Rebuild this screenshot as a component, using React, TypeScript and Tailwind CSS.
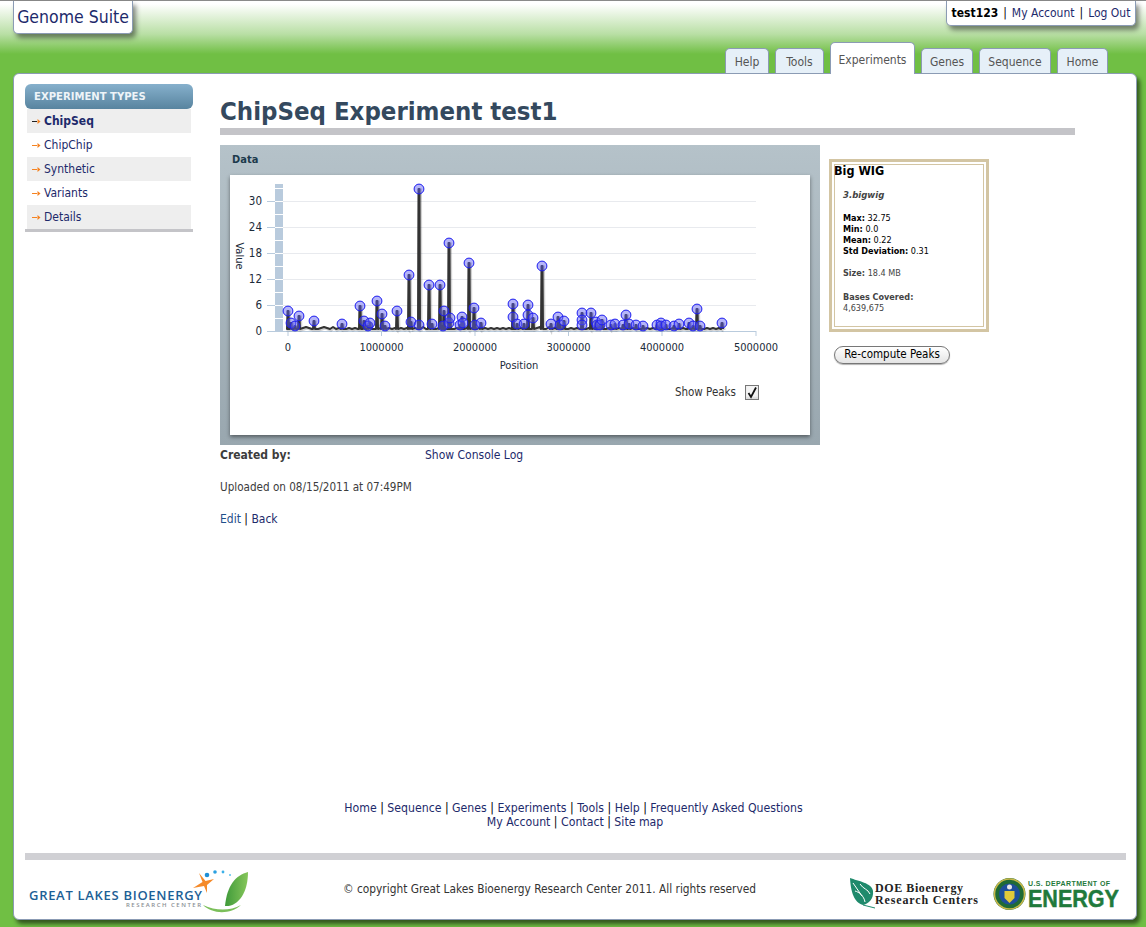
const navItems = ['ChipSeq', 'ChipChip', 'Synthetic', 'Variants', 'Details'];

const tabs = [
  { label: 'Help', width: 'w-[44px]' },
  { label: 'Tools', width: 'w-[49px]' },
  { label: 'Experiments', width: 'w-[85px]', active: true },
  { label: 'Genes', width: 'w-[52px]' },
  { label: 'Sequence', width: 'w-[72px]' },
  { label: 'Home', width: 'w-[51px]' },
];

// peak tops, in page pixels, read off the plot
const peaks: [number, number][] = [
  [288, 311], [291, 323], [295, 326], [299, 316], [314, 321], [342, 324], [360, 306], [364, 321],
  [368, 326], [370, 323], [377, 301], [382, 314], [385, 326], [397, 311], [409, 275], [411, 322],
  [419, 189], [419, 325], [429, 285], [432, 324], [440, 285], [443, 326], [444, 311], [449, 243],
  [449, 323], [450, 318], [460, 325], [462, 317], [463, 323], [469, 263], [474, 308], [475, 325],
  [481, 323], [513, 304], [513, 317], [517, 324], [524, 324], [528, 305], [528, 315], [533, 318],
  [542, 266], [551, 324], [558, 317], [560, 325], [564, 321], [582, 313], [582, 320], [582, 325],
  [591, 313], [596, 322], [597, 325], [600, 325], [602, 320], [611, 325], [615, 324], [623, 325],
  [626, 315], [629, 324], [636, 325], [643, 326], [657, 325], [661, 323], [661, 326], [666, 325],
  [674, 326], [679, 324], [689, 323], [693, 326], [697, 309], [700, 326], [722, 323],
];

function tracePath() {
  let d = 'M290 329';
  let x = 290;
  peaks.forEach(([px, py]) => {
    while (x + 3 < px) {
      x += 3;
      d += ` L${x} ${x % 9 === 0 ? 327 : x % 2 === 0 ? 329 : 328}`;
    }
    d += ` L${px - 1} 329 L${px - 0.5} ${py} L${px + 0.5} ${py} L${px + 1} 329`;
    x = Math.max(x, px + 1);
  });
  return d;
}

function NavArrow({ dark }: { dark?: boolean }) {
  return (
    <svg width="9" height="7" viewBox="0 0 9 7" className="shrink-0">
      <path d="M0 3.5H5" stroke={dark ? '#222' : '#f58220'} strokeWidth="1" />
      <path d="M5.5 1L8.5 3.5L5.5 6Z" fill="#f58220" />
    </svg>
  );
}

function Chart() {
  const yTicks = [
    { y: 201, label: '30' },
    { y: 227, label: '24' },
    { y: 253, label: '18' },
    { y: 279, label: '12' },
    { y: 305, label: '6' },
    { y: 331, label: '0' },
  ];
  const xTicks = [
    { x: 288, label: '0' },
    { x: 381.5, label: '1000000' },
    { x: 475, label: '2000000' },
    { x: 568.5, label: '3000000' },
    { x: 662, label: '4000000' },
    { x: 756, label: '5000000' },
  ];
  const bandBreaks = [188, 201, 214, 227, 240, 253, 266, 279, 292, 305, 318];

  return (
    <svg width="580" height="205" viewBox="230 175 580 205" className="block">
      {yTicks.slice(0, 5).map((t) => (
        <line key={t.y} x1="283" x2="756" y1={t.y + 0.5} y2={t.y + 0.5} stroke="#e8eaee" />
      ))}
      <rect x="275" y="184" width="8" height="147" fill="#b9cbdd" />
      {bandBreaks.map((y) => (
        <rect key={y} x="275" y={y} width="8" height="1" fill="#fff" />
      ))}
      <rect x="275" y="331" width="481" height="1" fill="#b9cbdd" />
      {yTicks.map((t) => (
        <g key={t.label}>
          <line x1="267" x2="275" y1={t.y + 0.5} y2={t.y + 0.5} stroke="#b9cbdd" />
          <text x="262" y={t.y + 3.5} textAnchor="end" fontSize="11.5" fill="#1c2b3a">
            {t.label}
          </text>
        </g>
      ))}
      {xTicks.map((t) => (
        <g key={t.label}>
          <line x1={t.x} x2={t.x} y1="331" y2="336" stroke="#b9cbdd" />
          <text x={t.x} y="351" textAnchor="middle" fontSize="11" fill="#1c2b3a">
            {t.label}
          </text>
        </g>
      ))}
      <text x="519" y="369" textAnchor="middle" fontSize="11" fill="#1c2b3a">
        Position
      </text>
      <text
        x="0"
        y="0"
        transform="translate(236 256) rotate(90)"
        textAnchor="middle"
        fontSize="11"
        fill="#1c2b3a"
      >
        Value
      </text>
      <path d={tracePath()} transform="translate(1 1)" fill="none" stroke="#000" strokeOpacity="0.18" strokeWidth="3" />
      <path d={tracePath()} fill="none" stroke="#333" strokeWidth="2" strokeLinejoin="round" />
      {peaks.map(([x, y], i) => (
        <circle key={i} cx={x} cy={y} r="4.9" fill="#5a5af0" fillOpacity="0.45" stroke="#1c1cf0" strokeWidth="1" />
      ))}
    </svg>
  );
}

function GlbrcLogo() {
  return (
    <svg width="222" height="44" viewBox="28 870 222 44" className="mt-[10px] block">
      <defs>
        <linearGradient id="glbrcLeaf" x1="0" x2="1" y1="0" y2="0">
          <stop offset="0" stopColor="#3f9a3a" />
          <stop offset="1" stopColor="#86c65a" />
        </linearGradient>
      </defs>
      <text x="29" y="900" fontSize="13" fontWeight="600" fill="#1d5f96" textLength="173" fontFamily="'Open Sans', sans-serif">
        GREAT LAKES BIOENERGY
      </text>
      <text x="126" y="907" fontSize="6" fontWeight="600" fill="#8b8f94" textLength="75" fontFamily="'Open Sans', sans-serif">
        RESEARCH CENTER
      </text>
      <path d="M199 873L205.500 881L214 879L207 885L207 893L204 886L193 888L202.500 882Z" fill="#f58a2a" />
      <circle cx="207" cy="875" r="2.300" fill="#1f8fd6" />
      <circle cx="215" cy="872" r="1.800" fill="#2ba0e0" />
      <circle cx="223" cy="872" r="1.400" fill="#3cb0e8" />
      <circle cx="230" cy="875" r="1" fill="#5cc0ee" />
      <path d="M248 872C236 875 227 885 225 906C238 907 248 893 248 872Z" fill="url(#glbrcLeaf)" />
      <path d="M203 905C212 914 230 915 241 905C230 911 216 911 203 905Z" fill="#7bbf5a" />
    </svg>
  );
}

function DoeLogos() {
  return (
    <div className="mt-[16px] flex items-start gap-[14px]">
      <svg width="130" height="38" viewBox="849 876 130 38" className="block">
        <path d="M850 878C858 881 872 883 873 891C874 899 868 904 863 905C856 903 851 896 850 878Z" fill="#1f8a6c" />
        <path d="M863 905L875 908" stroke="#1f8a6c" strokeWidth="1" />
        <path d="M853 883L862 896M860 884C863 889 868 889 870 894M855 891C859 892 864 896 865 902" stroke="#fff" strokeWidth="1" fill="none" />
        <text x="875" y="892" fontSize="12" fontWeight="700" fill="#222" textLength="88" fontFamily="'Liberation Serif', serif">
          DOE Bioenergy
        </text>
        <text x="875" y="904" fontSize="12" fontWeight="700" fill="#222" textLength="103" fontFamily="'Liberation Serif', serif">
          Research Centers
        </text>
      </svg>
      <svg width="128" height="38" viewBox="993 876 128 38" className="block">
        <circle cx="1009.500" cy="894" r="16" fill="#1f6b35" />
        <circle cx="1009.500" cy="894" r="15" fill="none" stroke="#c9b84a" strokeWidth="1.500" />
        <circle cx="1009.500" cy="894" r="10.500" fill="#1e4f9a" />
        <path d="M1004.500 891H1014.500V898L1009.500 903L1004.500 898Z" fill="#e2c93a" />
        <circle cx="1009.500" cy="887" r="2.500" fill="#e8e8e8" />
        <text x="1028" y="886" fontSize="7" fontWeight="700" fill="#1f7a3c" textLength="82" fontFamily="'Liberation Sans', sans-serif">
          U.S. DEPARTMENT OF
        </text>
        <text x="1028" y="907" fontSize="24" fontWeight="700" fill="#1f7a3c" textLength="91" lengthAdjust="spacingAndGlyphs" stroke="#1f7a3c" strokeWidth="0.5" fontFamily="'Liberation Sans', sans-serif">
          ENERGY
        </text>
      </svg>
    </div>
  );
}

export default function App() {
  return (
    <div className="min-h-[927px] bg-[#70bf44] font-['DejaVu_Sans_Condensed','DejaVu_Sans',sans-serif] text-[12px] text-[#3c3c3c]">
      <header className="flex h-[73px] justify-between border-t border-[#8a8a8a] bg-[linear-gradient(to_bottom,#fff_3px,#b9dfa5_33px,#70bf44_53px)] pl-[13px] pr-[10px]">
        <div className="flex h-[33px] w-[120px] items-center justify-center rounded-b-[5px] border border-t-0 border-[#8b9bb4] bg-white text-[17.5px] text-[#1d2a6b] shadow-[3px_4px_5px_rgba(0,0,0,0.45)]">
          Genome Suite
        </div>
        <div className="flex flex-col items-end">
          <div className="flex h-[25px] w-[190px] items-center justify-center gap-[5px] rounded-b-[5px] border border-t-0 border-[#8b9bb4] bg-white whitespace-nowrap text-[#1d2a6b] shadow-[3px_4px_5px_rgba(0,0,0,0.45)]">
            <b className="text-black">test123</b>
            <span className="text-black">|</span>
            <a>My Account</a>
            <span className="text-black">|</span>
            <a>Log Out</a>
          </div>
          <nav className="mt-auto mr-[28px] flex items-end gap-[6px]">
            {tabs.map((t) => (
              <div
                key={t.label}
                className={
                  t.active
                    ? `${t.width} relative z-10 -mb-px flex h-[32px] items-start justify-center rounded-t-[5px] border border-b-0 border-[#8b9bb4] bg-white pt-[8px] text-[#555]`
                    : `${t.width} flex h-[25px] items-center justify-center rounded-t-[5px] border border-b-0 border-[#8b9bb4] bg-[#e6f0f8] pt-[2px] text-[#555]`
                }
              >
                {t.label}
              </div>
            ))}
          </nav>
        </div>
      </header>

      <div className="ml-[13px] flex h-[847px] w-[1124px] flex-col rounded-[6px] border border-[#8b9bb4] bg-white shadow-[3px_4px_4px_rgba(0,0,0,0.55)]">
        <div className="flex flex-1 pl-[11px]">
          <aside className="mt-[10px] w-[168px] shrink-0">
            <div className="flex h-[25px] items-center rounded-[6px] bg-[linear-gradient(to_bottom,#86b0cc,#58849f)] pt-px pl-[9px] text-[11.2px] font-bold text-[#eef4f8]">
              EXPERIMENT TYPES
            </div>
            <ul className="border-b-[3px] border-[#c4c4c8] px-[2px]">
              {navItems.map((item, i) => (
                <li
                  key={item}
                  className={`flex h-[24px] items-center gap-[3px] pl-[5px] text-[#1d2a6b] ${i % 2 === 0 ? 'bg-[#eeeeee]' : ''} ${i === 0 ? 'font-bold' : ''}`}
                >
                  <NavArrow dark={i === 0} />
                  {item}
                </li>
              ))}
            </ul>
          </aside>

          <main className="ml-[27px] w-[855px] pt-[10px]">
            <h1 className="h-[44px] text-[25.5px] leading-[54px] font-bold whitespace-nowrap text-[#34495e]">
              ChipSeq Experiment test1
            </h1>
            <div className="h-[7px] bg-[#c4c4c8]" />
            <div className="mt-[10px] flex items-start">
              <section className="flex h-[300px] w-[600px] flex-col bg-[linear-gradient(to_bottom,#b5c2c9,#99a7af)] px-[10px]">
                <h2 className="flex h-[30px] items-center pl-[2px] text-[11px] font-bold text-[#1c3a4c]">Data</h2>
                <div className="h-[260px] bg-white shadow-[0_2px_4px_rgba(0,0,0,0.45)]">
                  <Chart />
                  <div className="mt-[4px] flex items-center justify-end gap-[9px] pr-[51px] text-[11.5px] text-[#333]">
                    Show Peaks
                    <span className="flex h-[15px] w-[14px] items-center justify-center border border-[#777] bg-[#f4f4f4] shadow-[inset_0_-2px_2px_rgba(0,0,0,0.1)]">
                      <svg width="12" height="13" viewBox="0 0 12 13">
                        <path d="M2.500 7L5 11L10 1.500" fill="none" stroke="#111" strokeWidth="1.800" />
                      </svg>
                    </span>
                  </div>
                </div>
              </section>

              <div className="mt-[14px] ml-[9px] w-[160px]">
                <div className="h-[173px] border-[3px] border-[#d3c5a3] p-[2px]">
                  <div className="h-full border border-[#d3c5a3] text-[9px] leading-[11px] text-[#444]">
                    <h3 className="-ml-px text-[12.500px] leading-[12px] font-bold text-black">Big WIG</h3>
                    <div className="pl-[8px]">
                      <p className="mt-[12px] text-[9.500px] font-bold italic">3.bigwig</p>
                      <p className="mt-[13px] text-black"><b>Max:</b> 32.75</p>
                      <p className="text-black"><b>Min:</b> 0.0</p>
                      <p className="text-black"><b>Mean:</b> 0.22</p>
                      <p className="text-black"><b>Std Deviation:</b> 0.31</p>
                      <p className="mt-[11px]"><b>Size:</b> 18.4 MB</p>
                      <p className="mt-[13px]"><b>Bases Covered:</b></p>
                      <p>4,639,675</p>
                    </div>
                  </div>
                </div>
                <button className="mt-[14px] ml-[5px] flex h-[18px] w-[116px] items-center justify-center rounded-full border border-[#777] bg-[linear-gradient(to_bottom,#fff,#e4e4e4)] text-[11.5px] text-black shadow-[0_1px_1px_rgba(0,0,0,0.3)]">
                  Re-compute Peaks
                </button>
              </div>
            </div>

            <div className="mt-[2px] flex h-[16px] items-center">
              <b className="w-[205px]">Created by:</b>
              <a className="text-[#1d2a6b]">Show Console Log</a>
            </div>
            <p className="mt-[16px] text-[11.6px] leading-[16px]">Uploaded on 08/15/2011 at 07:49PM</p>
            <p className="mt-[16px] leading-[16px] text-black">
              <a className="text-[#1f4f8a]">Edit</a> | <a className="text-[#1d2a6b]">Back</a>
            </p>
          </main>
        </div>

        <div className="pr-[3px] text-center text-[12.2px] leading-[14px] text-[#1d2a6b]">
          <p>
            Home <span className="text-black">|</span> Sequence <span className="text-black">|</span> Genes{' '}
            <span className="text-black">|</span> Experiments <span className="text-black">|</span> Tools{' '}
            <span className="text-black">|</span> Help <span className="text-black">|</span> Frequently Asked Questions
          </p>
          <p className="pl-[3px]">
            My Account <span className="text-black">|</span> Contact <span className="text-black">|</span> Site map
          </p>
        </div>
        <div className="mx-[11px] mt-[24px] h-[7px] w-[1101px] bg-[#d0d0d4]" />
        <footer className="flex h-[59px] items-start justify-between pr-[15px] pl-[14px]">
          <GlbrcLogo />
          <p className="mt-[21px] text-[11.8px] leading-[16px] whitespace-nowrap text-[#333]">© copyright Great Lakes Bioenergy Research Center 2011. All rights reserved</p>
          <DoeLogos />
        </footer>
      </div>
    </div>
  );
}
